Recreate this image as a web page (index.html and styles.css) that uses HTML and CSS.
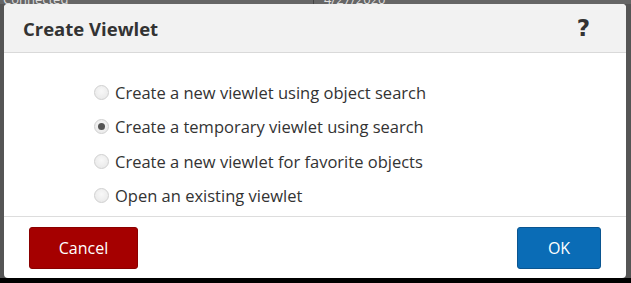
FILE: index.html
```html
<!DOCTYPE html>
<html>
<head>
<meta charset="utf-8">
<link rel="stylesheet" href="styles.css">
</head>
<body>
<div class="backdrop">
  <div class="topbar"><span class="bg-text">Connected</span><span class="bg-sep"></span><span class="bg-text bg-date">4/27/2020</span></div>
  <div class="stage">
    <div class="dialog">
      <div class="dialog-header">
        <h1 class="dialog-title">Create Viewlet</h1>
        <span class="help">?</span>
      </div>
      <div class="dialog-body">
        <ul class="options">
          <li class="option"><span class="radio"></span><span class="label">Create a new viewlet using object search</span></li>
          <li class="option"><span class="radio checked"></span><span class="label">Create a temporary viewlet using search</span></li>
          <li class="option"><span class="radio"></span><span class="label">Create a new viewlet for favorite objects</span></li>
          <li class="option"><span class="radio"></span><span class="label">Open an existing viewlet</span></li>
        </ul>
      </div>
      <div class="dialog-footer">
        <button class="btn btn-cancel">Cancel</button>
        <button class="btn btn-ok">OK</button>
      </div>
    </div>
  </div>
</div>
</body>
</html>
```
FILE: styles.css
```css
html, body {
  margin: 0;
  padding: 0;
  width: 631px;
  height: 283px;
  overflow: hidden;
  background: #000;
  font-family: "Open Sans", "Noto Sans", sans-serif;
}
.backdrop {
  display: flex;
  flex-direction: column;
  width: 631px;
  height: 283px;
}
.topbar {
  height: 4px;
  background: #666;
  overflow: hidden;
  display: flex;
  align-items: flex-end;
  font-size: 13px;
  line-height: 13px;
  color: #ddd;
}
.bg-text {
  margin-left: 3px;
  margin-bottom: -2px;
  width: 360px;
}
.bg-sep {
  width: 1px;
  height: 4px;
  background: #444;
  margin-left: 3px;
}
.bg-date {
  margin-left: 10px;
}
.stage {
  flex: 1;
  display: flex;
  background: linear-gradient(to bottom, #555 0, #555 calc(100% - 5px), #000 calc(100% - 5px));
  padding: 0 5px 5px 4px;
}
.dialog {
  flex: 1;
  display: flex;
  flex-direction: column;
  background: #fff;
  border-radius: 4px;
  overflow: hidden;
}
.dialog-header {
  height: 48px;
  background: #f2f2f2;
  border-bottom: 1px solid #d9d9d9;
  display: flex;
  align-items: center;
  justify-content: space-between;
  padding: 0 36px 0 19px;
}
.dialog-title {
  margin: 0;
  font-size: 18.5px;
  font-weight: 700;
  color: #333;
}
.help {
  font-family: "DejaVu Sans", sans-serif;
  font-size: 23px;
  font-weight: 700;
  color: #333;
}
.dialog-body {
  flex: 1;
  padding: 22px 0 0 90px;
}
.options {
  list-style: none;
  margin: 0;
  padding: 0;
}
.option {
  display: flex;
  align-items: center;
  height: 34.5px;
}
.radio {
  width: 13px;
  height: 13px;
  border-radius: 50%;
  border: 1px solid #d0d0d0;
  background: radial-gradient(circle at 50% 40%, #f8f8f8, #e6e6e6);
  margin-right: 6px;
  display: flex;
  align-items: center;
  justify-content: center;
}
.radio.checked::after {
  content: "";
  width: 7px;
  height: 7px;
  border-radius: 50%;
  background: #555;
}
.label {
  font-size: 16.5px;
  color: #333;
}
.dialog-footer {
  height: 51px;
  border-top: 1px solid #ddd;
  display: flex;
  justify-content: space-between;
  align-items: flex-start;
  padding: 10px 25px 0 25px;
}
.btn {
  height: 42px;
  border-radius: 3px;
  font-family: "Open Sans", "Noto Sans", sans-serif;
  font-size: 16px;
  color: #fff;
  padding: 0;
}
.btn-cancel {
  width: 109px;
  background: #a50000;
  border: 1px solid #8a0000;
}
.btn-ok {
  width: 84px;
  background: #0a6cb6;
  border: 1px solid #0a5590;
}
```
